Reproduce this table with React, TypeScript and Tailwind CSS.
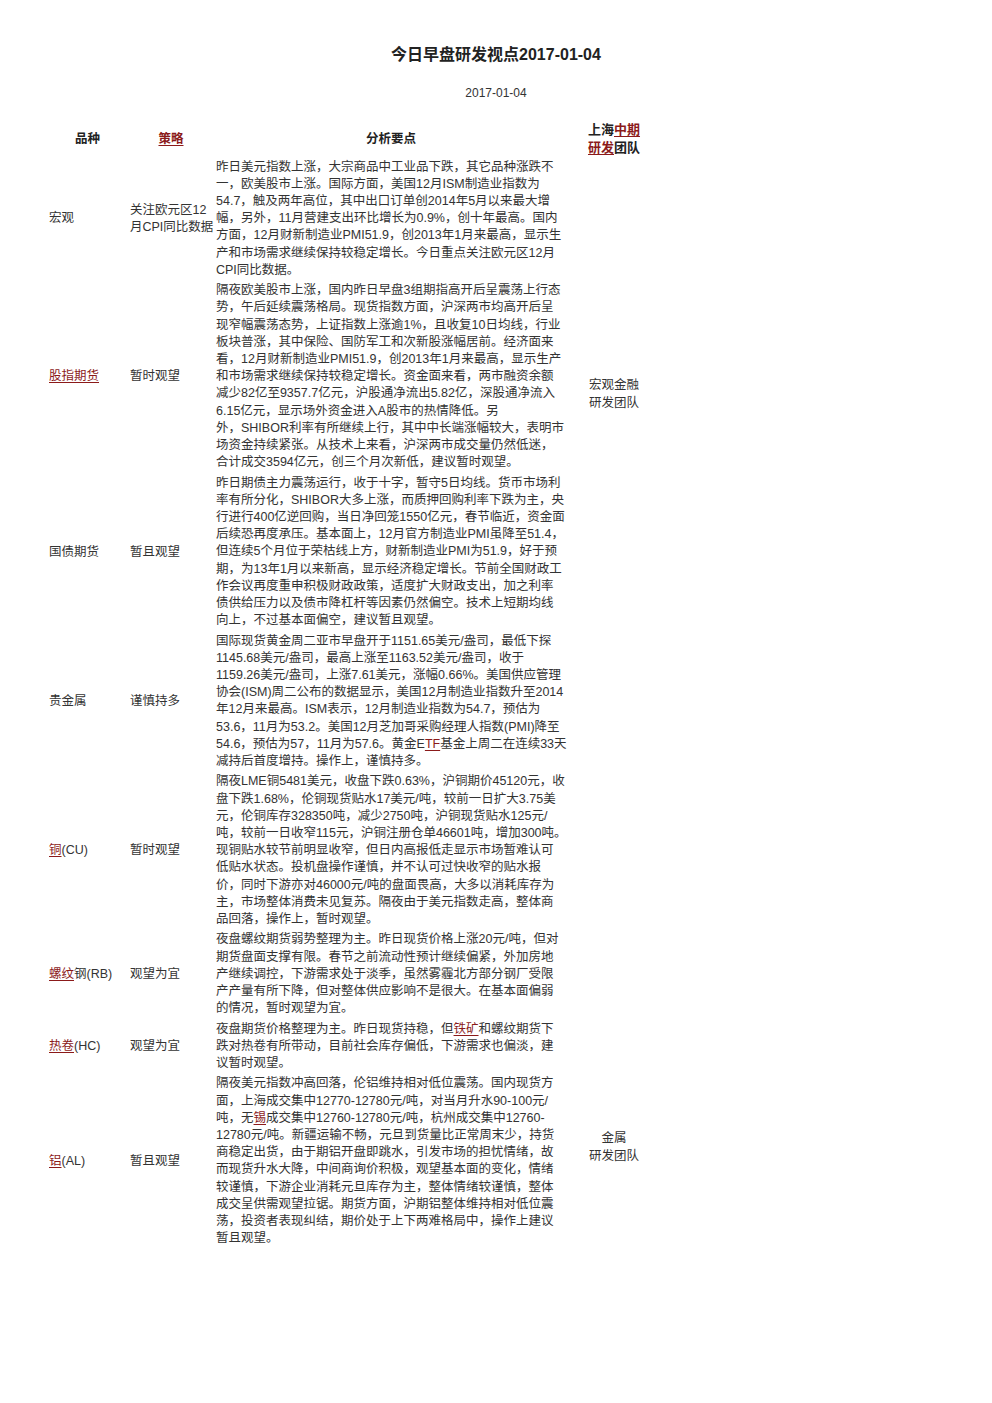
import React from "react";

const A = ({ children }: { children: React.ReactNode }) => (
  <span className="text-[#8b1a1a] underline underline-offset-2">{children}</span>
);

type Row = {
  name: React.ReactNode;
  strategy: React.ReactNode;
  lines: React.ReactNode[];
};

const rows: Row[] = [
  {
    name: "宏观",
    strategy: (
      <>
        <div>关注欧元区12</div>
        <div>月CPI同比数据</div>
      </>
    ),
    lines: [
      "昨日美元指数上涨，大宗商品中工业品下跌，其它品种涨跌不",
      "一，欧美股市上涨。国际方面，美国12月ISM制造业指数为",
      "54.7，触及两年高位，其中出口订单创2014年5月以来最大增",
      "幅，另外，11月营建支出环比增长为0.9%，创十年最高。国内",
      "方面，12月财新制造业PMI51.9，创2013年1月来最高，显示生",
      "产和市场需求继续保持较稳定增长。今日重点关注欧元区12月",
      "CPI同比数据。",
    ],
  },
  {
    name: <A>股指期货</A>,
    strategy: "暂时观望",
    lines: [
      "隔夜欧美股市上涨，国内昨日早盘3组期指高开后呈震荡上行态",
      "势，午后延续震荡格局。现货指数方面，沪深两市均高开后呈",
      "现窄幅震荡态势，上证指数上涨逾1%，且收复10日均线，行业",
      "板块普涨，其中保险、国防军工和次新股涨幅居前。经济面来",
      "看，12月财新制造业PMI51.9，创2013年1月来最高，显示生产",
      "和市场需求继续保持较稳定增长。资金面来看，两市融资余额",
      "减少82亿至9357.7亿元，沪股通净流出5.82亿，深股通净流入",
      "6.15亿元，显示场外资金进入A股市的热情降低。另",
      "外，SHIBOR利率有所继续上行，其中中长端涨幅较大，表明市",
      "场资金持续紧张。从技术上来看，沪深两市成交量仍然低迷，",
      "合计成交3594亿元，创三个月次新低，建议暂时观望。",
    ],
  },
  {
    name: "国债期货",
    strategy: "暂且观望",
    lines: [
      "昨日期债主力震荡运行，收于十字，暂守5日均线。货币市场利",
      "率有所分化，SHIBOR大多上涨，而质押回购利率下跌为主，央",
      "行进行400亿逆回购，当日净回笼1550亿元，春节临近，资金面",
      "后续恐再度承压。基本面上，12月官方制造业PMI虽降至51.4，",
      "但连续5个月位于荣枯线上方，财新制造业PMI为51.9，好于预",
      "期，为13年1月以来新高，显示经济稳定增长。节前全国财政工",
      "作会议再度重申积极财政政策，适度扩大财政支出，加之利率",
      "债供给压力以及债市降杠杆等因素仍然偏空。技术上短期均线",
      "向上，不过基本面偏空，建议暂且观望。",
    ],
  },
  {
    name: "贵金属",
    strategy: "谨慎持多",
    lines: [
      "国际现货黄金周二亚市早盘开于1151.65美元/盎司，最低下探",
      "1145.68美元/盎司，最高上涨至1163.52美元/盎司，收于",
      "1159.26美元/盎司，上涨7.61美元，涨幅0.66%。美国供应管理",
      "协会(ISM)周二公布的数据显示，美国12月制造业指数升至2014",
      "年12月来最高。ISM表示，12月制造业指数为54.7，预估为",
      "53.6，11月为53.2。美国12月芝加哥采购经理人指数(PMI)降至",
      <>
        54.6，预估为57，11月为57.6。黄金E<A>TF</A>基金上周二在连续33天
      </>,
      "减持后首度增持。操作上，谨慎持多。",
    ],
  },
  {
    name: (
      <>
        <A>铜</A>(CU)
      </>
    ),
    strategy: "暂时观望",
    lines: [
      "隔夜LME铜5481美元，收盘下跌0.63%，沪铜期价45120元，收",
      "盘下跌1.68%，伦铜现货贴水17美元/吨，较前一日扩大3.75美",
      "元，伦铜库存328350吨，减少2750吨，沪铜现货贴水125元/",
      "吨，较前一日收窄115元，沪铜注册仓单46601吨，增加300吨。",
      "现铜贴水较节前明显收窄，但日内高报低走显示市场暂难认可",
      "低贴水状态。投机盘操作谨慎，并不认可过快收窄的贴水报",
      "价，同时下游亦对46000元/吨的盘面畏高，大多以消耗库存为",
      "主，市场整体消费未见复苏。隔夜由于美元指数走高，整体商",
      "品回落，操作上，暂时观望。",
    ],
  },
  {
    name: (
      <>
        <A>螺纹</A>钢(RB)
      </>
    ),
    strategy: "观望为宜",
    lines: [
      "夜盘螺纹期货弱势整理为主。昨日现货价格上涨20元/吨，但对",
      "期货盘面支撑有限。春节之前流动性预计继续偏紧，外加房地",
      "产继续调控，下游需求处于淡季，虽然雾霾北方部分钢厂受限",
      "产产量有所下降，但对整体供应影响不是很大。在基本面偏弱",
      "的情况，暂时观望为宜。",
    ],
  },
  {
    name: (
      <>
        <A>热卷</A>(HC)
      </>
    ),
    strategy: "观望为宜",
    lines: [
      <>
        夜盘期货价格整理为主。昨日现货持稳，但<A>铁矿</A>和螺纹期货下
      </>,
      "跌对热卷有所带动，目前社会库存偏低，下游需求也偏淡，建",
      "议暂时观望。",
    ],
  },
  {
    name: (
      <>
        <A>铝</A>(AL)
      </>
    ),
    strategy: "暂且观望",
    lines: [
      "隔夜美元指数冲高回落，伦铝维持相对低位震荡。国内现货方",
      "面，上海成交集中12770-12780元/吨，对当月升水90-100元/",
      <>
        吨，无<A>锡</A>成交集中12760-12780元/吨，杭州成交集中12760-
      </>,
      "12780元/吨。新疆运输不畅，元旦到货量比正常周末少，持货",
      "商稳定出货，由于期铝开盘即跳水，引发市场的担忧情绪，故",
      "而现货升水大降，中间商询价积极，观望基本面的变化，情绪",
      "较谨慎，下游企业消耗元旦库存为主，整体情绪较谨慎，整体",
      "成交呈供需观望拉锯。期货方面，沪期铝整体维持相对低位震",
      "荡，投资者表现纠结，期价处于上下两难格局中，操作上建议",
      "暂且观望。",
    ],
  },
];

export default function App() {
  return (
    <div className="min-h-[1403px] w-full bg-white font-['Liberation_Sans','Noto_Sans_CJK_SC',sans-serif] text-[12.5px] text-[#333]">
      <div className="pt-[45px] text-center text-[16px] font-bold leading-[20px] text-[#222]">
        今日早盘研发视点2017-01-04
      </div>
      <div className="mt-[19.5px] text-center text-[12px] leading-[17px]">2017-01-04</div>
      <div className="ml-[47px] mt-[19.5px] grid w-[613px] grid-cols-[81px_86px_354px_92px]">
        {/* header */}
        <div className="col-start-1 flex h-[36px] items-center justify-center font-bold text-[#222]">品种</div>
        <div className="col-start-2 flex h-[36px] items-center justify-center font-bold">
          <A>策略</A>
        </div>
        <div className="col-start-3 flex h-[36px] items-center justify-center font-bold text-[#222]">分析要点</div>
        <div className="col-start-4 flex h-[36px] flex-col items-center justify-center text-[13px] font-bold leading-[18px] text-[#222]">
          <div>
            上海<A>中期</A>
          </div>
          <div>
            <A>研发</A>团队
          </div>
        </div>

        {rows.map((r, i) => (
          <React.Fragment key={i}>
            <div className="col-start-1 flex items-center whitespace-nowrap pl-[2px]">{r.name}</div>
            <div className="col-start-2 flex flex-col justify-center whitespace-nowrap pl-[2px] leading-[17px]">{r.strategy}</div>
            <div className="col-start-3 py-[1.6px] pl-[2px] leading-[17.2px]">
              {r.lines.map((l, j) => (
                <div key={j} className="whitespace-nowrap">
                  {l}
                </div>
              ))}
            </div>
            {i === 0 && (
              <div className="col-start-4 row-span-3 flex flex-col items-center justify-center leading-[18px]">
                <div>宏观金融</div>
                <div>研发团队</div>
              </div>
            )}
            {i === 3 && (
              <div className="col-start-4 row-span-5 flex flex-col items-center justify-end pb-[84px] leading-[18px]">
                <div>金属</div>
                <div>研发团队</div>
              </div>
            )}
          </React.Fragment>
        ))}
      </div>
    </div>
  );
}
